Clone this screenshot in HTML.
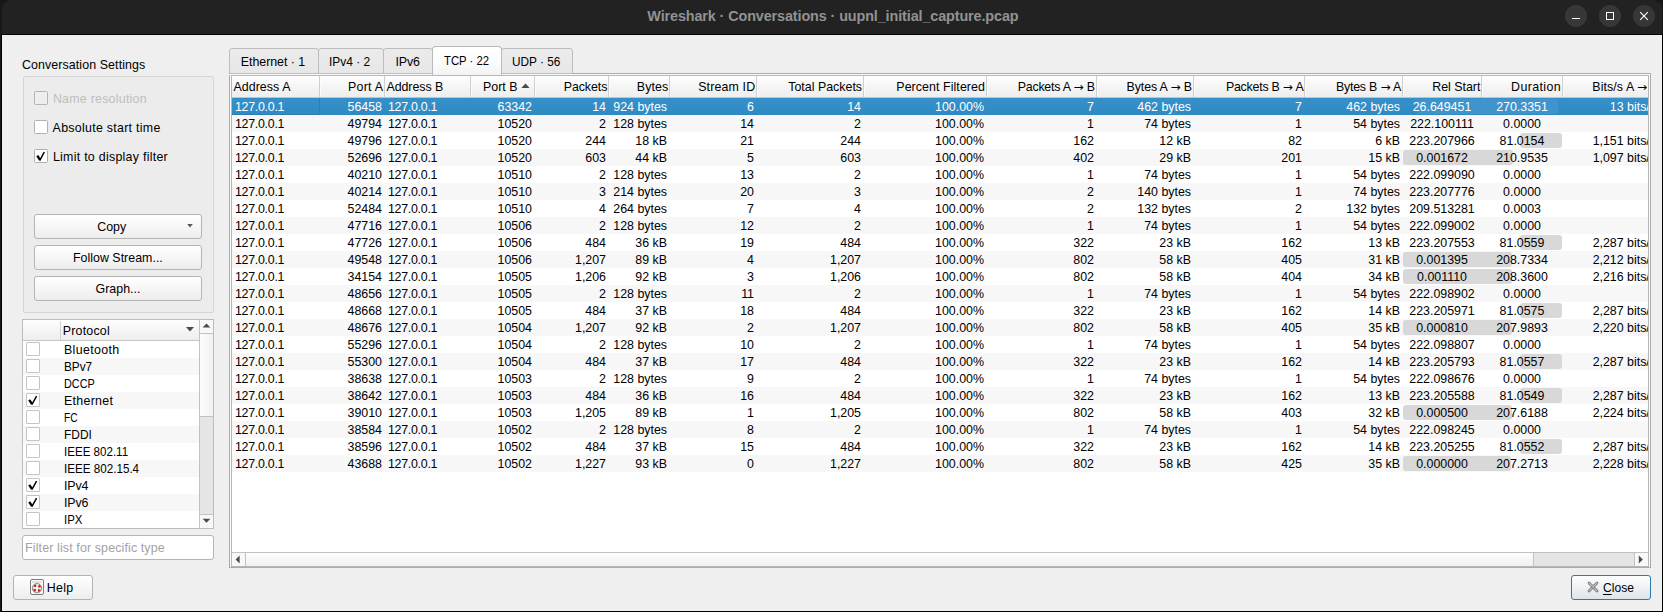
<!DOCTYPE html>
<html><head><meta charset="utf-8"><title>Wireshark · Conversations</title>
<style>
html,body{margin:0;padding:0;background:#000;}
body{width:1663px;height:612px;position:relative;overflow:hidden;font-family:"Liberation Sans",sans-serif;font-size:12.4px;color:#000;}
#root,#root div,#root svg{position:absolute;box-sizing:border-box;}
.t{white-space:pre;line-height:17px;height:17px;}
.btn{border:1px solid #b4b4b4;border-radius:3px;background:linear-gradient(#ffffff,#f6f6f6 50%,#ededed);}
.cb{width:14px;height:14px;border:1px solid #b0b0b0;border-radius:1.5px;background:#fff;}
.sep{top:76px;width:2px;height:21px;background:linear-gradient(90deg,#cfcfcf 50%,#fbfbfb 50%);}
.row{left:232px;width:1417px;height:17px;}
.c{top:1px;height:17px;line-height:17px;white-space:pre;}
.r{text-align:right;}
.bar{height:15px;top:1px;border-radius:3px;}
</style></head><body>
<div id="root" style="left:0;top:0;width:1663px;height:612px;background:#000;overflow:hidden;">
<div style="left:0;top:0;width:1px;height:612px;background:#191919"></div>
<div style="left:1px;top:0;width:1662px;height:34px;background:#161616"></div>
<div style="left:2px;top:0;width:1660px;height:34px;background:#222222;border-radius:9px 9px 0 0;"></div>
<div style="left:2px;top:34px;width:1660px;height:1px;background:#050505;"></div>
<div style="left:2px;top:35px;width:1660px;height:576px;background:#efefef;"></div>

<div class="t" style="left:647.3px;top:8px;letter-spacing:-0.113px;font-size:14.4px;font-weight:bold;color:#929292;">Wireshark · Conversations · uupnl_initial_capture.pcap</div>
<div style="left:1565px;top:5px;width:22px;height:22px;border-radius:11px;background:#373737"><svg style="left:0;top:0" width="22" height="22"><path d="M7 13.5h8" stroke="#fff" stroke-width="1" fill="none"/></svg></div>
<div style="left:1599px;top:5px;width:22px;height:22px;border-radius:11px;background:#373737"><svg style="left:0;top:0" width="22" height="22"><rect x="7.5" y="7.5" width="7" height="7" stroke="#fff" stroke-width="1" fill="none"/></svg></div>
<div style="left:1633px;top:5px;width:22px;height:22px;border-radius:11px;background:#373737"><svg style="left:0;top:0" width="22" height="22"><path d="M7.2 7.2l7.6 7.6M14.8 7.2l-7.6 7.6" stroke="#fff" stroke-width="1.1" fill="none"/></svg></div>
<div class="t" style="left:21.9px;top:57px;letter-spacing:0.108px;font-size:12.4px;">Conversation Settings</div>
<div style="left:23px;top:76px;width:191px;height:237px;border:1px solid #d5d5d5;border-radius:2px;background:#ececec;"></div>
<div class="cb" style="left:34px;top:91px;background:#eeeeee;border-color:#b4b4b4;"></div>
<div class="t" style="left:52.9px;top:91px;letter-spacing:0.251px;font-size:12.4px;color:#bebebe;">Name resolution</div>
<div class="cb" style="left:34px;top:120px;"></div>
<div class="t" style="left:52.6px;top:120px;letter-spacing:0.283px;font-size:12.4px;">Absolute start time</div>
<div class="cb" style="left:34px;top:149px;"><svg style="left:0;top:0" width="12" height="12" viewBox="0 0 12 12"><path d="M2.3 5.7L5 9.9" stroke="#000" stroke-width="2.4" fill="none"/><path d="M4.7 10.7L9.3 2" stroke="#000" stroke-width="1.5" fill="none"/></svg></div>
<div class="t" style="left:52.9px;top:149px;letter-spacing:0.273px;font-size:12.4px;">Limit to display filter</div>
<div class="btn" style="left:34px;top:214px;width:168px;height:25px;"></div>
<div class="t" style="left:97.2px;top:219px;letter-spacing:0.016px;font-size:12.4px;">Copy</div>
<div class="btn" style="left:34px;top:245px;width:168px;height:25px;"></div>
<div class="t" style="left:73.0px;top:250px;letter-spacing:0.018px;font-size:12.4px;">Follow Stream...</div>
<div class="btn" style="left:34px;top:276px;width:168px;height:25px;"></div>
<div class="t" style="left:95.6px;top:281px;letter-spacing:0.004px;font-size:12.4px;">Graph...</div>
<svg style="left:186px;top:223px" width="8" height="6"><path d="M1.2 1h5.6l-2.8 3.6z" fill="#555"/></svg>
<div style="left:22px;top:319px;width:192px;height:210px;border:1px solid #bcbcbc;background:#fff;"></div>
<div style="left:23px;top:320px;width:176px;height:21px;background:linear-gradient(#fdfdfd,#eeeeee);border-bottom:1px solid #c6c6c6;"></div>
<div style="left:60px;top:321px;width:1px;height:19px;background:#d0d0d0;"></div>
<div class="t" style="left:62.7px;top:323px;letter-spacing:0.229px;font-size:12.4px;">Protocol</div>
<svg style="left:185px;top:326px" width="10" height="7"><path d="M1 1h8l-4 4.6z" fill="#4a4a4a"/></svg>
<div class="cb" style="left:26px;top:342px;width:14px;height:14px;border-color:#c4c4c4;border-radius:1px"></div>
<div class="t" style="left:64.0px;top:342px;letter-spacing:0.338px;font-size:12.4px;">Bluetooth</div>
<div style="left:23px;top:358px;width:176px;height:17px;background:#f7f7f7"></div>
<div class="cb" style="left:26px;top:359px;width:14px;height:14px;border-color:#c4c4c4;border-radius:1px"></div>
<div class="t" style="left:64.0px;top:359px;transform-origin:0 0;transform:scaleX(0.9485);font-size:12.4px;">BPv7</div>
<div class="cb" style="left:26px;top:376px;width:14px;height:14px;border-color:#c4c4c4;border-radius:1px"></div>
<div class="t" style="left:64.0px;top:376px;transform-origin:0 0;transform:scaleX(0.8744);font-size:12.4px;">DCCP</div>
<div style="left:23px;top:392px;width:176px;height:17px;background:#f7f7f7"></div>
<div class="cb" style="left:26px;top:393px;width:14px;height:14px;border-color:#c4c4c4;border-radius:1px"><svg style="left:0;top:0" width="12" height="12" viewBox="0 0 12 12"><path d="M2.2 5.9L5 10" stroke="#000" stroke-width="2.3" fill="none"/><path d="M4.8 10.7L9.6 2.2" stroke="#000" stroke-width="1.5" fill="none"/></svg></div>
<div class="t" style="left:64.0px;top:393px;letter-spacing:0.295px;font-size:12.4px;">Ethernet</div>
<div class="cb" style="left:26px;top:410px;width:14px;height:14px;border-color:#c4c4c4;border-radius:1px"></div>
<div class="t" style="left:64.0px;top:410px;transform-origin:0 0;transform:scaleX(0.8227);font-size:12.4px;">FC</div>
<div style="left:23px;top:426px;width:176px;height:17px;background:#f7f7f7"></div>
<div class="cb" style="left:26px;top:427px;width:14px;height:14px;border-color:#c4c4c4;border-radius:1px"></div>
<div class="t" style="left:64.0px;top:427px;transform-origin:0 0;transform:scaleX(0.9612);font-size:12.4px;">FDDI</div>
<div class="cb" style="left:26px;top:444px;width:14px;height:14px;border-color:#c4c4c4;border-radius:1px"></div>
<div class="t" style="left:64.0px;top:444px;transform-origin:0 0;transform:scaleX(0.9336);font-size:12.4px;">IEEE 802.11</div>
<div style="left:23px;top:460px;width:176px;height:17px;background:#f7f7f7"></div>
<div class="cb" style="left:26px;top:461px;width:14px;height:14px;border-color:#c4c4c4;border-radius:1px"></div>
<div class="t" style="left:64.0px;top:461px;transform-origin:0 0;transform:scaleX(0.9397);font-size:12.4px;">IEEE 802.15.4</div>
<div class="cb" style="left:26px;top:478px;width:14px;height:14px;border-color:#c4c4c4;border-radius:1px"><svg style="left:0;top:0" width="12" height="12" viewBox="0 0 12 12"><path d="M2.2 5.9L5 10" stroke="#000" stroke-width="2.3" fill="none"/><path d="M4.8 10.7L9.6 2.2" stroke="#000" stroke-width="1.5" fill="none"/></svg></div>
<div class="t" style="left:64.0px;top:478px;letter-spacing:-0.099px;font-size:12.4px;">IPv4</div>
<div style="left:23px;top:494px;width:176px;height:17px;background:#f7f7f7"></div>
<div class="cb" style="left:26px;top:495px;width:14px;height:14px;border-color:#c4c4c4;border-radius:1px"><svg style="left:0;top:0" width="12" height="12" viewBox="0 0 12 12"><path d="M2.2 5.9L5 10" stroke="#000" stroke-width="2.3" fill="none"/><path d="M4.8 10.7L9.6 2.2" stroke="#000" stroke-width="1.5" fill="none"/></svg></div>
<div class="t" style="left:64.0px;top:495px;letter-spacing:-0.099px;font-size:12.4px;">IPv6</div>
<div class="cb" style="left:26px;top:512px;width:14px;height:14px;border-color:#c4c4c4;border-radius:1px"></div>
<div class="t" style="left:64.0px;top:512px;transform-origin:0 0;transform:scaleX(0.9257);font-size:12.4px;">IPX</div>
<div style="left:199px;top:320px;width:14px;height:208px;background:#e5e5e5;border-left:1px solid #c2c2c2;"></div>
<div style="left:200px;top:320px;width:13px;height:14px;background:#f8f8f8;border-bottom:1px solid #c2c2c2"><svg style="left:1.5px;top:3.3px" width="9" height="6"><path d="M0.6 4.6l3.9-4l3.9 4z" fill="#4a4a4a"/></svg></div>
<div style="left:200px;top:334px;width:13px;height:83px;background:linear-gradient(90deg,#fdfdfd,#f1f1f1);border-bottom:1px solid #c2c2c2"></div>
<div style="left:200px;top:514px;width:13px;height:14px;background:#f8f8f8;border-top:1px solid #c2c2c2"><svg style="left:1.5px;top:3.2px" width="9" height="6"><path d="M0.6 0.8l3.9 4l3.9-4z" fill="#4a4a4a"/></svg></div>
<div style="left:22px;top:535px;width:192px;height:25px;border:1px solid #b4b4b4;border-radius:3px;background:#fff;"></div>
<div class="t" style="left:25.1px;top:540px;letter-spacing:0.139px;font-size:12.4px;color:#a2a2a2;">Filter list for specific type</div>
<div class="btn" style="left:13px;top:575px;width:80px;height:25px;"></div>
<div style="left:30px;top:579px;width:14px;height:16px;border:1px solid #7b7b73;border-radius:2px;background:#fbfbfb"><div style="left:1px;top:1px;width:10px;height:2px;background:#e1e1df"></div><svg style="left:0;top:2px" width="12" height="12" viewBox="0 0 12 12"><circle cx="6" cy="6.2" r="4.7" fill="#e3eceA" stroke="#808080" stroke-width="0.9"/><circle cx="6" cy="6.2" r="3.0" fill="none" stroke="#d92020" stroke-width="2.5" stroke-dasharray="2.2 2.512" stroke-dashoffset="-1.256"/><circle cx="6" cy="6.2" r="1.3" fill="#ffffff"/></svg></div>
<div class="t" style="left:46.8px;top:580px;letter-spacing:0.304px;font-size:12.4px;">Help</div>
<div style="left:229px;top:73px;width:1422px;height:495px;border:1px solid #ababab;background:#fbfbfb;"></div>
<div style="left:229px;top:48px;width:90px;height:26px;border:1px solid #bdbdbd;border-radius:3px 3px 0 0;background:linear-gradient(#ebebeb,#e7e7e7);"></div>
<div class="t" style="left:240.8px;top:54px;letter-spacing:-0.037px;font-size:12.4px;">Ethernet · 1</div>
<div style="left:318px;top:48px;width:66px;height:26px;border:1px solid #bdbdbd;border-radius:3px 3px 0 0;background:linear-gradient(#ebebeb,#e7e7e7);"></div>
<div class="t" style="left:329.3px;top:54px;transform-origin:0 0;transform:scaleX(0.9648);font-size:12.4px;">IPv4 · 2</div>
<div style="left:383px;top:48px;width:50px;height:26px;border:1px solid #bdbdbd;border-radius:3px 3px 0 0;background:linear-gradient(#ebebeb,#e7e7e7);"></div>
<div class="t" style="left:395.5px;top:54px;letter-spacing:-0.124px;font-size:12.4px;">IPv6</div>
<div style="left:501px;top:48px;width:72px;height:26px;border:1px solid #bdbdbd;border-radius:3px 3px 0 0;background:linear-gradient(#ebebeb,#e7e7e7);"></div>
<div class="t" style="left:512.4px;top:54px;transform-origin:0 0;transform:scaleX(0.9520);font-size:12.4px;">UDP · 56</div>
<div style="left:432px;top:46px;width:70px;height:29px;border:1px solid #b9b9b9;border-bottom:none;border-radius:4px 4px 0 0;background:linear-gradient(#ffffff,#fbfbfb 60%,#f3f3f3);"></div>
<div class="t" style="left:443.7px;top:53px;transform-origin:0 0;transform:scaleX(0.9117);font-size:12.4px;">TCP · 22</div>
<div style="left:229px;top:74px;width:1px;height:1px;background:#f6f6f6"></div>
<div style="left:231px;top:75px;width:1418px;height:492px;border:1px solid #b6b6b6;background:#fff;"></div>
<div style="left:0;top:0;width:1648px;height:566px;overflow:hidden;background:transparent;">
<div style="left:232px;top:76px;width:1416px;height:22px;background:linear-gradient(#fefefe,#f6f6f6 45%,#eeeeee);border-bottom:1px solid #c4c4c4;"></div>
<div class="t" style="left:233.4px;top:79px;letter-spacing:0.068px;font-size:12.4px;">Address A</div>
<div class="sep" style="left:319px"></div>
<div class="t" style="left:348.1px;top:79px;letter-spacing:0.225px;font-size:12.4px;">Port A</div>
<div class="sep" style="left:384px"></div>
<div class="t" style="left:386.5px;top:79px;letter-spacing:-0.064px;font-size:12.4px;">Address B</div>
<div class="sep" style="left:470px"></div>
<div class="t" style="left:482.9px;top:79px;letter-spacing:0.044px;font-size:12.4px;">Port B</div>
<div class="sep" style="left:534px"></div>
<div class="t" style="left:563.7px;top:79px;letter-spacing:-0.068px;font-size:12.4px;">Packets</div>
<div class="sep" style="left:608px"></div>
<div class="t" style="left:636.8px;top:79px;letter-spacing:0.080px;font-size:12.4px;">Bytes</div>
<div class="sep" style="left:669px"></div>
<div class="t" style="left:698.2px;top:79px;letter-spacing:0.147px;font-size:12.4px;">Stream ID</div>
<div class="sep" style="left:756px"></div>
<div class="t" style="left:788.2px;top:79px;letter-spacing:0.015px;font-size:12.4px;">Total Packets</div>
<div class="sep" style="left:863px"></div>
<div class="t" style="left:896.3px;top:79px;letter-spacing:0.077px;font-size:12.4px;">Percent Filtered</div>
<div class="sep" style="left:986px"></div>
<div class="t" style="left:1017.7px;top:79px;letter-spacing:-0.215px">Packets A <span style="font-family:'DejaVu Sans',sans-serif;font-size:12px;letter-spacing:0">→</span> B</div>
<div class="sep" style="left:1096px"></div>
<div class="t" style="left:1126.6px;top:79px;letter-spacing:-0.120px">Bytes A <span style="font-family:'DejaVu Sans',sans-serif;font-size:12px;letter-spacing:0">→</span> B</div>
<div class="sep" style="left:1193px"></div>
<div class="t" style="left:1225.9px;top:79px;letter-spacing:-0.230px">Packets B <span style="font-family:'DejaVu Sans',sans-serif;font-size:12px;letter-spacing:0">→</span> A</div>
<div class="sep" style="left:1304px"></div>
<div class="t" style="left:1335.9px;top:79px;letter-spacing:-0.207px">Bytes B <span style="font-family:'DejaVu Sans',sans-serif;font-size:12px;letter-spacing:0">→</span> A</div>
<div class="sep" style="left:1402px"></div>
<div class="t" style="left:1432.3px;top:79px;letter-spacing:-0.011px;font-size:12.4px;">Rel Start</div>
<div class="sep" style="left:1481px"></div>
<div class="t" style="left:1511.1px;top:79px;letter-spacing:0.382px;font-size:12.4px;">Duration</div>
<div class="sep" style="left:1562px"></div>
<div class="t" style="left:1592.3px;top:79px;letter-spacing:0.080px">Bits/s A <span style="font-family:'DejaVu Sans',sans-serif;font-size:12px;letter-spacing:0">→</span></div>
<svg style="left:521px;top:83px" width="9" height="6"><path d="M0.4 5l4.1-4.4l4.1 4.4z" fill="#4a4a4a"/></svg>
<div class="row" style="top:98px;background:linear-gradient(#3691ca,#2f8ac4);color:#fff">
<div style="left:0;top:0;width:88px;height:17px;border:1px solid #2b7fb6;border-top-color:#318bc4;border-left:none;"></div>
<div class="bar" style="left:1184.9px;width:141.3px;background:#3e94cb"></div>
<div class="c" style="left:3px;width:87px;letter-spacing:-0.28px">127.0.0.1</div>
<div class="c r" style="left:88px;width:62.0px">56458</div>
<div class="c" style="left:156px;width:85px;letter-spacing:-0.28px">127.0.0.1</div>
<div class="c r" style="left:239px;width:61.0px">63342</div>
<div class="c r" style="left:303px;width:71.0px">14</div>
<div class="c r" style="left:377px;width:58.0px">924 bytes</div>
<div class="c r" style="left:438px;width:84.0px">6</div>
<div class="c r" style="left:525px;width:104.0px">14</div>
<div class="c r" style="left:632px;width:120.0px">100.00%</div>
<div class="c r" style="left:755px;width:107.0px">7</div>
<div class="c r" style="left:865px;width:94.0px">462 bytes</div>
<div class="c r" style="left:962px;width:108.0px">7</div>
<div class="c r" style="left:1073px;width:95.0px">462 bytes</div>
<div class="c" style="left:1171px;width:78px;text-align:center">26.649451</div>
<div class="c" style="left:1250px;width:80px;text-align:center">270.3351</div>
<div class="c r" style="left:1331px;width:93px">13 bits/s</div>
</div>
<div class="row" style="top:115px;background:#f7f7f7;color:#000">
<div class="c" style="left:3px;width:87px;letter-spacing:-0.28px">127.0.0.1</div>
<div class="c r" style="left:88px;width:62.0px">49794</div>
<div class="c" style="left:156px;width:85px;letter-spacing:-0.28px">127.0.0.1</div>
<div class="c r" style="left:239px;width:61.0px">10520</div>
<div class="c r" style="left:303px;width:71.0px">2</div>
<div class="c r" style="left:377px;width:58.0px">128 bytes</div>
<div class="c r" style="left:438px;width:84.0px">14</div>
<div class="c r" style="left:525px;width:104.0px">2</div>
<div class="c r" style="left:632px;width:120.0px">100.00%</div>
<div class="c r" style="left:755px;width:107.0px">1</div>
<div class="c r" style="left:865px;width:94.0px">74 bytes</div>
<div class="c r" style="left:962px;width:108.0px">1</div>
<div class="c r" style="left:1073px;width:95.0px">54 bytes</div>
<div class="c" style="left:1171px;width:78px;text-align:center">222.100111</div>
<div class="c" style="left:1250px;width:80px;text-align:center">0.0000</div>
</div>
<div class="row" style="top:132px;background:#fff;color:#000">
<div class="bar" style="left:1287.6px;width:42.3px;background:#d8d8d8"></div>
<div class="c" style="left:3px;width:87px;letter-spacing:-0.28px">127.0.0.1</div>
<div class="c r" style="left:88px;width:62.0px">49796</div>
<div class="c" style="left:156px;width:85px;letter-spacing:-0.28px">127.0.0.1</div>
<div class="c r" style="left:239px;width:61.0px">10520</div>
<div class="c r" style="left:303px;width:71.0px">244</div>
<div class="c r" style="left:377px;width:58.0px">18 kB</div>
<div class="c r" style="left:438px;width:84.0px">21</div>
<div class="c r" style="left:525px;width:104.0px">244</div>
<div class="c r" style="left:632px;width:120.0px">100.00%</div>
<div class="c r" style="left:755px;width:107.0px">162</div>
<div class="c r" style="left:865px;width:94.0px">12 kB</div>
<div class="c r" style="left:962px;width:108.0px">82</div>
<div class="c r" style="left:1073px;width:95.0px">6 kB</div>
<div class="c" style="left:1171px;width:78px;text-align:center">223.207966</div>
<div class="c" style="left:1250px;width:80px;text-align:center">81.0154</div>
<div class="c r" style="left:1331px;width:93px">1,151 bits/s</div>
</div>
<div class="row" style="top:149px;background:#f7f7f7;color:#000">
<div class="bar" style="left:1171.0px;width:110.2px;background:#d8d8d8"></div>
<div class="c" style="left:3px;width:87px;letter-spacing:-0.28px">127.0.0.1</div>
<div class="c r" style="left:88px;width:62.0px">52696</div>
<div class="c" style="left:156px;width:85px;letter-spacing:-0.28px">127.0.0.1</div>
<div class="c r" style="left:239px;width:61.0px">10520</div>
<div class="c r" style="left:303px;width:71.0px">603</div>
<div class="c r" style="left:377px;width:58.0px">44 kB</div>
<div class="c r" style="left:438px;width:84.0px">5</div>
<div class="c r" style="left:525px;width:104.0px">603</div>
<div class="c r" style="left:632px;width:120.0px">100.00%</div>
<div class="c r" style="left:755px;width:107.0px">402</div>
<div class="c r" style="left:865px;width:94.0px">29 kB</div>
<div class="c r" style="left:962px;width:108.0px">201</div>
<div class="c r" style="left:1073px;width:95.0px">15 kB</div>
<div class="c" style="left:1171px;width:78px;text-align:center">0.001672</div>
<div class="c" style="left:1250px;width:80px;text-align:center">210.9535</div>
<div class="c r" style="left:1331px;width:93px">1,097 bits/s</div>
</div>
<div class="row" style="top:166px;background:#fff;color:#000">
<div class="c" style="left:3px;width:87px;letter-spacing:-0.28px">127.0.0.1</div>
<div class="c r" style="left:88px;width:62.0px">40210</div>
<div class="c" style="left:156px;width:85px;letter-spacing:-0.28px">127.0.0.1</div>
<div class="c r" style="left:239px;width:61.0px">10510</div>
<div class="c r" style="left:303px;width:71.0px">2</div>
<div class="c r" style="left:377px;width:58.0px">128 bytes</div>
<div class="c r" style="left:438px;width:84.0px">13</div>
<div class="c r" style="left:525px;width:104.0px">2</div>
<div class="c r" style="left:632px;width:120.0px">100.00%</div>
<div class="c r" style="left:755px;width:107.0px">1</div>
<div class="c r" style="left:865px;width:94.0px">74 bytes</div>
<div class="c r" style="left:962px;width:108.0px">1</div>
<div class="c r" style="left:1073px;width:95.0px">54 bytes</div>
<div class="c" style="left:1171px;width:78px;text-align:center">222.099090</div>
<div class="c" style="left:1250px;width:80px;text-align:center">0.0000</div>
</div>
<div class="row" style="top:183px;background:#f7f7f7;color:#000">
<div class="c" style="left:3px;width:87px;letter-spacing:-0.28px">127.0.0.1</div>
<div class="c r" style="left:88px;width:62.0px">40214</div>
<div class="c" style="left:156px;width:85px;letter-spacing:-0.28px">127.0.0.1</div>
<div class="c r" style="left:239px;width:61.0px">10510</div>
<div class="c r" style="left:303px;width:71.0px">3</div>
<div class="c r" style="left:377px;width:58.0px">214 bytes</div>
<div class="c r" style="left:438px;width:84.0px">20</div>
<div class="c r" style="left:525px;width:104.0px">3</div>
<div class="c r" style="left:632px;width:120.0px">100.00%</div>
<div class="c r" style="left:755px;width:107.0px">2</div>
<div class="c r" style="left:865px;width:94.0px">140 bytes</div>
<div class="c r" style="left:962px;width:108.0px">1</div>
<div class="c r" style="left:1073px;width:95.0px">74 bytes</div>
<div class="c" style="left:1171px;width:78px;text-align:center">223.207776</div>
<div class="c" style="left:1250px;width:80px;text-align:center">0.0000</div>
</div>
<div class="row" style="top:200px;background:#fff;color:#000">
<div class="c" style="left:3px;width:87px;letter-spacing:-0.28px">127.0.0.1</div>
<div class="c r" style="left:88px;width:62.0px">52484</div>
<div class="c" style="left:156px;width:85px;letter-spacing:-0.28px">127.0.0.1</div>
<div class="c r" style="left:239px;width:61.0px">10510</div>
<div class="c r" style="left:303px;width:71.0px">4</div>
<div class="c r" style="left:377px;width:58.0px">264 bytes</div>
<div class="c r" style="left:438px;width:84.0px">7</div>
<div class="c r" style="left:525px;width:104.0px">4</div>
<div class="c r" style="left:632px;width:120.0px">100.00%</div>
<div class="c r" style="left:755px;width:107.0px">2</div>
<div class="c r" style="left:865px;width:94.0px">132 bytes</div>
<div class="c r" style="left:962px;width:108.0px">2</div>
<div class="c r" style="left:1073px;width:95.0px">132 bytes</div>
<div class="c" style="left:1171px;width:78px;text-align:center">209.513281</div>
<div class="c" style="left:1250px;width:80px;text-align:center">0.0003</div>
</div>
<div class="row" style="top:217px;background:#f7f7f7;color:#000">
<div class="c" style="left:3px;width:87px;letter-spacing:-0.28px">127.0.0.1</div>
<div class="c r" style="left:88px;width:62.0px">47716</div>
<div class="c" style="left:156px;width:85px;letter-spacing:-0.28px">127.0.0.1</div>
<div class="c r" style="left:239px;width:61.0px">10506</div>
<div class="c r" style="left:303px;width:71.0px">2</div>
<div class="c r" style="left:377px;width:58.0px">128 bytes</div>
<div class="c r" style="left:438px;width:84.0px">12</div>
<div class="c r" style="left:525px;width:104.0px">2</div>
<div class="c r" style="left:632px;width:120.0px">100.00%</div>
<div class="c r" style="left:755px;width:107.0px">1</div>
<div class="c r" style="left:865px;width:94.0px">74 bytes</div>
<div class="c r" style="left:962px;width:108.0px">1</div>
<div class="c r" style="left:1073px;width:95.0px">54 bytes</div>
<div class="c" style="left:1171px;width:78px;text-align:center">222.099002</div>
<div class="c" style="left:1250px;width:80px;text-align:center">0.0000</div>
</div>
<div class="row" style="top:234px;background:#fff;color:#000">
<div class="bar" style="left:1287.6px;width:42.4px;background:#d8d8d8"></div>
<div class="c" style="left:3px;width:87px;letter-spacing:-0.28px">127.0.0.1</div>
<div class="c r" style="left:88px;width:62.0px">47726</div>
<div class="c" style="left:156px;width:85px;letter-spacing:-0.28px">127.0.0.1</div>
<div class="c r" style="left:239px;width:61.0px">10506</div>
<div class="c r" style="left:303px;width:71.0px">484</div>
<div class="c r" style="left:377px;width:58.0px">36 kB</div>
<div class="c r" style="left:438px;width:84.0px">19</div>
<div class="c r" style="left:525px;width:104.0px">484</div>
<div class="c r" style="left:632px;width:120.0px">100.00%</div>
<div class="c r" style="left:755px;width:107.0px">322</div>
<div class="c r" style="left:865px;width:94.0px">23 kB</div>
<div class="c r" style="left:962px;width:108.0px">162</div>
<div class="c r" style="left:1073px;width:95.0px">13 kB</div>
<div class="c" style="left:1171px;width:78px;text-align:center">223.207553</div>
<div class="c" style="left:1250px;width:80px;text-align:center">81.0559</div>
<div class="c r" style="left:1331px;width:93px">2,287 bits/s</div>
</div>
<div class="row" style="top:251px;background:#f7f7f7;color:#000">
<div class="bar" style="left:1171.0px;width:109.1px;background:#d8d8d8"></div>
<div class="c" style="left:3px;width:87px;letter-spacing:-0.28px">127.0.0.1</div>
<div class="c r" style="left:88px;width:62.0px">49548</div>
<div class="c" style="left:156px;width:85px;letter-spacing:-0.28px">127.0.0.1</div>
<div class="c r" style="left:239px;width:61.0px">10506</div>
<div class="c r" style="left:303px;width:71.0px">1,207</div>
<div class="c r" style="left:377px;width:58.0px">89 kB</div>
<div class="c r" style="left:438px;width:84.0px">4</div>
<div class="c r" style="left:525px;width:104.0px">1,207</div>
<div class="c r" style="left:632px;width:120.0px">100.00%</div>
<div class="c r" style="left:755px;width:107.0px">802</div>
<div class="c r" style="left:865px;width:94.0px">58 kB</div>
<div class="c r" style="left:962px;width:108.0px">405</div>
<div class="c r" style="left:1073px;width:95.0px">31 kB</div>
<div class="c" style="left:1171px;width:78px;text-align:center">0.001395</div>
<div class="c" style="left:1250px;width:80px;text-align:center">208.7334</div>
<div class="c r" style="left:1331px;width:93px">2,212 bits/s</div>
</div>
<div class="row" style="top:268px;background:#fff;color:#000">
<div class="bar" style="left:1171.0px;width:108.9px;background:#d8d8d8"></div>
<div class="c" style="left:3px;width:87px;letter-spacing:-0.28px">127.0.0.1</div>
<div class="c r" style="left:88px;width:62.0px">34154</div>
<div class="c" style="left:156px;width:85px;letter-spacing:-0.28px">127.0.0.1</div>
<div class="c r" style="left:239px;width:61.0px">10505</div>
<div class="c r" style="left:303px;width:71.0px">1,206</div>
<div class="c r" style="left:377px;width:58.0px">92 kB</div>
<div class="c r" style="left:438px;width:84.0px">3</div>
<div class="c r" style="left:525px;width:104.0px">1,206</div>
<div class="c r" style="left:632px;width:120.0px">100.00%</div>
<div class="c r" style="left:755px;width:107.0px">802</div>
<div class="c r" style="left:865px;width:94.0px">58 kB</div>
<div class="c r" style="left:962px;width:108.0px">404</div>
<div class="c r" style="left:1073px;width:95.0px">34 kB</div>
<div class="c" style="left:1171px;width:78px;text-align:center">0.001110</div>
<div class="c" style="left:1250px;width:80px;text-align:center">208.3600</div>
<div class="c r" style="left:1331px;width:93px">2,216 bits/s</div>
</div>
<div class="row" style="top:285px;background:#f7f7f7;color:#000">
<div class="c" style="left:3px;width:87px;letter-spacing:-0.28px">127.0.0.1</div>
<div class="c r" style="left:88px;width:62.0px">48656</div>
<div class="c" style="left:156px;width:85px;letter-spacing:-0.28px">127.0.0.1</div>
<div class="c r" style="left:239px;width:61.0px">10505</div>
<div class="c r" style="left:303px;width:71.0px">2</div>
<div class="c r" style="left:377px;width:58.0px">128 bytes</div>
<div class="c r" style="left:438px;width:84.0px">11</div>
<div class="c r" style="left:525px;width:104.0px">2</div>
<div class="c r" style="left:632px;width:120.0px">100.00%</div>
<div class="c r" style="left:755px;width:107.0px">1</div>
<div class="c r" style="left:865px;width:94.0px">74 bytes</div>
<div class="c r" style="left:962px;width:108.0px">1</div>
<div class="c r" style="left:1073px;width:95.0px">54 bytes</div>
<div class="c" style="left:1171px;width:78px;text-align:center">222.098902</div>
<div class="c" style="left:1250px;width:80px;text-align:center">0.0000</div>
</div>
<div class="row" style="top:302px;background:#fff;color:#000">
<div class="bar" style="left:1287.6px;width:42.4px;background:#d8d8d8"></div>
<div class="c" style="left:3px;width:87px;letter-spacing:-0.28px">127.0.0.1</div>
<div class="c r" style="left:88px;width:62.0px">48668</div>
<div class="c" style="left:156px;width:85px;letter-spacing:-0.28px">127.0.0.1</div>
<div class="c r" style="left:239px;width:61.0px">10505</div>
<div class="c r" style="left:303px;width:71.0px">484</div>
<div class="c r" style="left:377px;width:58.0px">37 kB</div>
<div class="c r" style="left:438px;width:84.0px">18</div>
<div class="c r" style="left:525px;width:104.0px">484</div>
<div class="c r" style="left:632px;width:120.0px">100.00%</div>
<div class="c r" style="left:755px;width:107.0px">322</div>
<div class="c r" style="left:865px;width:94.0px">23 kB</div>
<div class="c r" style="left:962px;width:108.0px">162</div>
<div class="c r" style="left:1073px;width:95.0px">14 kB</div>
<div class="c" style="left:1171px;width:78px;text-align:center">223.205971</div>
<div class="c" style="left:1250px;width:80px;text-align:center">81.0575</div>
<div class="c r" style="left:1331px;width:93px">2,287 bits/s</div>
</div>
<div class="row" style="top:319px;background:#f7f7f7;color:#000">
<div class="bar" style="left:1171.0px;width:108.7px;background:#d8d8d8"></div>
<div class="c" style="left:3px;width:87px;letter-spacing:-0.28px">127.0.0.1</div>
<div class="c r" style="left:88px;width:62.0px">48676</div>
<div class="c" style="left:156px;width:85px;letter-spacing:-0.28px">127.0.0.1</div>
<div class="c r" style="left:239px;width:61.0px">10504</div>
<div class="c r" style="left:303px;width:71.0px">1,207</div>
<div class="c r" style="left:377px;width:58.0px">92 kB</div>
<div class="c r" style="left:438px;width:84.0px">2</div>
<div class="c r" style="left:525px;width:104.0px">1,207</div>
<div class="c r" style="left:632px;width:120.0px">100.00%</div>
<div class="c r" style="left:755px;width:107.0px">802</div>
<div class="c r" style="left:865px;width:94.0px">58 kB</div>
<div class="c r" style="left:962px;width:108.0px">405</div>
<div class="c r" style="left:1073px;width:95.0px">35 kB</div>
<div class="c" style="left:1171px;width:78px;text-align:center">0.000810</div>
<div class="c" style="left:1250px;width:80px;text-align:center">207.9893</div>
<div class="c r" style="left:1331px;width:93px">2,220 bits/s</div>
</div>
<div class="row" style="top:336px;background:#fff;color:#000">
<div class="c" style="left:3px;width:87px;letter-spacing:-0.28px">127.0.0.1</div>
<div class="c r" style="left:88px;width:62.0px">55296</div>
<div class="c" style="left:156px;width:85px;letter-spacing:-0.28px">127.0.0.1</div>
<div class="c r" style="left:239px;width:61.0px">10504</div>
<div class="c r" style="left:303px;width:71.0px">2</div>
<div class="c r" style="left:377px;width:58.0px">128 bytes</div>
<div class="c r" style="left:438px;width:84.0px">10</div>
<div class="c r" style="left:525px;width:104.0px">2</div>
<div class="c r" style="left:632px;width:120.0px">100.00%</div>
<div class="c r" style="left:755px;width:107.0px">1</div>
<div class="c r" style="left:865px;width:94.0px">74 bytes</div>
<div class="c r" style="left:962px;width:108.0px">1</div>
<div class="c r" style="left:1073px;width:95.0px">54 bytes</div>
<div class="c" style="left:1171px;width:78px;text-align:center">222.098807</div>
<div class="c" style="left:1250px;width:80px;text-align:center">0.0000</div>
</div>
<div class="row" style="top:353px;background:#f7f7f7;color:#000">
<div class="bar" style="left:1287.6px;width:42.4px;background:#d8d8d8"></div>
<div class="c" style="left:3px;width:87px;letter-spacing:-0.28px">127.0.0.1</div>
<div class="c r" style="left:88px;width:62.0px">55300</div>
<div class="c" style="left:156px;width:85px;letter-spacing:-0.28px">127.0.0.1</div>
<div class="c r" style="left:239px;width:61.0px">10504</div>
<div class="c r" style="left:303px;width:71.0px">484</div>
<div class="c r" style="left:377px;width:58.0px">37 kB</div>
<div class="c r" style="left:438px;width:84.0px">17</div>
<div class="c r" style="left:525px;width:104.0px">484</div>
<div class="c r" style="left:632px;width:120.0px">100.00%</div>
<div class="c r" style="left:755px;width:107.0px">322</div>
<div class="c r" style="left:865px;width:94.0px">23 kB</div>
<div class="c r" style="left:962px;width:108.0px">162</div>
<div class="c r" style="left:1073px;width:95.0px">14 kB</div>
<div class="c" style="left:1171px;width:78px;text-align:center">223.205793</div>
<div class="c" style="left:1250px;width:80px;text-align:center">81.0557</div>
<div class="c r" style="left:1331px;width:93px">2,287 bits/s</div>
</div>
<div class="row" style="top:370px;background:#fff;color:#000">
<div class="c" style="left:3px;width:87px;letter-spacing:-0.28px">127.0.0.1</div>
<div class="c r" style="left:88px;width:62.0px">38638</div>
<div class="c" style="left:156px;width:85px;letter-spacing:-0.28px">127.0.0.1</div>
<div class="c r" style="left:239px;width:61.0px">10503</div>
<div class="c r" style="left:303px;width:71.0px">2</div>
<div class="c r" style="left:377px;width:58.0px">128 bytes</div>
<div class="c r" style="left:438px;width:84.0px">9</div>
<div class="c r" style="left:525px;width:104.0px">2</div>
<div class="c r" style="left:632px;width:120.0px">100.00%</div>
<div class="c r" style="left:755px;width:107.0px">1</div>
<div class="c r" style="left:865px;width:94.0px">74 bytes</div>
<div class="c r" style="left:962px;width:108.0px">1</div>
<div class="c r" style="left:1073px;width:95.0px">54 bytes</div>
<div class="c" style="left:1171px;width:78px;text-align:center">222.098676</div>
<div class="c" style="left:1250px;width:80px;text-align:center">0.0000</div>
</div>
<div class="row" style="top:387px;background:#f7f7f7;color:#000">
<div class="bar" style="left:1287.6px;width:42.4px;background:#d8d8d8"></div>
<div class="c" style="left:3px;width:87px;letter-spacing:-0.28px">127.0.0.1</div>
<div class="c r" style="left:88px;width:62.0px">38642</div>
<div class="c" style="left:156px;width:85px;letter-spacing:-0.28px">127.0.0.1</div>
<div class="c r" style="left:239px;width:61.0px">10503</div>
<div class="c r" style="left:303px;width:71.0px">484</div>
<div class="c r" style="left:377px;width:58.0px">36 kB</div>
<div class="c r" style="left:438px;width:84.0px">16</div>
<div class="c r" style="left:525px;width:104.0px">484</div>
<div class="c r" style="left:632px;width:120.0px">100.00%</div>
<div class="c r" style="left:755px;width:107.0px">322</div>
<div class="c r" style="left:865px;width:94.0px">23 kB</div>
<div class="c r" style="left:962px;width:108.0px">162</div>
<div class="c r" style="left:1073px;width:95.0px">13 kB</div>
<div class="c" style="left:1171px;width:78px;text-align:center">223.205588</div>
<div class="c" style="left:1250px;width:80px;text-align:center">81.0549</div>
<div class="c r" style="left:1331px;width:93px">2,287 bits/s</div>
</div>
<div class="row" style="top:404px;background:#fff;color:#000">
<div class="bar" style="left:1171.0px;width:108.5px;background:#d8d8d8"></div>
<div class="c" style="left:3px;width:87px;letter-spacing:-0.28px">127.0.0.1</div>
<div class="c r" style="left:88px;width:62.0px">39010</div>
<div class="c" style="left:156px;width:85px;letter-spacing:-0.28px">127.0.0.1</div>
<div class="c r" style="left:239px;width:61.0px">10503</div>
<div class="c r" style="left:303px;width:71.0px">1,205</div>
<div class="c r" style="left:377px;width:58.0px">89 kB</div>
<div class="c r" style="left:438px;width:84.0px">1</div>
<div class="c r" style="left:525px;width:104.0px">1,205</div>
<div class="c r" style="left:632px;width:120.0px">100.00%</div>
<div class="c r" style="left:755px;width:107.0px">802</div>
<div class="c r" style="left:865px;width:94.0px">58 kB</div>
<div class="c r" style="left:962px;width:108.0px">403</div>
<div class="c r" style="left:1073px;width:95.0px">32 kB</div>
<div class="c" style="left:1171px;width:78px;text-align:center">0.000500</div>
<div class="c" style="left:1250px;width:80px;text-align:center">207.6188</div>
<div class="c r" style="left:1331px;width:93px">2,224 bits/s</div>
</div>
<div class="row" style="top:421px;background:#f7f7f7;color:#000">
<div class="c" style="left:3px;width:87px;letter-spacing:-0.28px">127.0.0.1</div>
<div class="c r" style="left:88px;width:62.0px">38584</div>
<div class="c" style="left:156px;width:85px;letter-spacing:-0.28px">127.0.0.1</div>
<div class="c r" style="left:239px;width:61.0px">10502</div>
<div class="c r" style="left:303px;width:71.0px">2</div>
<div class="c r" style="left:377px;width:58.0px">128 bytes</div>
<div class="c r" style="left:438px;width:84.0px">8</div>
<div class="c r" style="left:525px;width:104.0px">2</div>
<div class="c r" style="left:632px;width:120.0px">100.00%</div>
<div class="c r" style="left:755px;width:107.0px">1</div>
<div class="c r" style="left:865px;width:94.0px">74 bytes</div>
<div class="c r" style="left:962px;width:108.0px">1</div>
<div class="c r" style="left:1073px;width:95.0px">54 bytes</div>
<div class="c" style="left:1171px;width:78px;text-align:center">222.098245</div>
<div class="c" style="left:1250px;width:80px;text-align:center">0.0000</div>
</div>
<div class="row" style="top:438px;background:#fff;color:#000">
<div class="bar" style="left:1287.6px;width:42.4px;background:#d8d8d8"></div>
<div class="c" style="left:3px;width:87px;letter-spacing:-0.28px">127.0.0.1</div>
<div class="c r" style="left:88px;width:62.0px">38596</div>
<div class="c" style="left:156px;width:85px;letter-spacing:-0.28px">127.0.0.1</div>
<div class="c r" style="left:239px;width:61.0px">10502</div>
<div class="c r" style="left:303px;width:71.0px">484</div>
<div class="c r" style="left:377px;width:58.0px">37 kB</div>
<div class="c r" style="left:438px;width:84.0px">15</div>
<div class="c r" style="left:525px;width:104.0px">484</div>
<div class="c r" style="left:632px;width:120.0px">100.00%</div>
<div class="c r" style="left:755px;width:107.0px">322</div>
<div class="c r" style="left:865px;width:94.0px">23 kB</div>
<div class="c r" style="left:962px;width:108.0px">162</div>
<div class="c r" style="left:1073px;width:95.0px">14 kB</div>
<div class="c" style="left:1171px;width:78px;text-align:center">223.205255</div>
<div class="c" style="left:1250px;width:80px;text-align:center">81.0552</div>
<div class="c r" style="left:1331px;width:93px">2,287 bits/s</div>
</div>
<div class="row" style="top:455px;background:#f7f7f7;color:#000">
<div class="bar" style="left:1171.0px;width:108.3px;background:#d8d8d8"></div>
<div class="c" style="left:3px;width:87px;letter-spacing:-0.28px">127.0.0.1</div>
<div class="c r" style="left:88px;width:62.0px">43688</div>
<div class="c" style="left:156px;width:85px;letter-spacing:-0.28px">127.0.0.1</div>
<div class="c r" style="left:239px;width:61.0px">10502</div>
<div class="c r" style="left:303px;width:71.0px">1,227</div>
<div class="c r" style="left:377px;width:58.0px">93 kB</div>
<div class="c r" style="left:438px;width:84.0px">0</div>
<div class="c r" style="left:525px;width:104.0px">1,227</div>
<div class="c r" style="left:632px;width:120.0px">100.00%</div>
<div class="c r" style="left:755px;width:107.0px">802</div>
<div class="c r" style="left:865px;width:94.0px">58 kB</div>
<div class="c r" style="left:962px;width:108.0px">425</div>
<div class="c r" style="left:1073px;width:95.0px">35 kB</div>
<div class="c" style="left:1171px;width:78px;text-align:center">0.000000</div>
<div class="c" style="left:1250px;width:80px;text-align:center">207.2713</div>
<div class="c r" style="left:1331px;width:93px">2,228 bits/s</div>
</div>
</div>
<div style="left:232px;top:552px;width:1416px;height:14px;background:#e5e5e5;border-top:1px solid #c2c2c2;"></div>
<div style="left:232px;top:553px;width:14px;height:13px;background:#f8f8f8;border-right:1px solid #c2c2c2"><svg style="left:3px;top:1.5px" width="6" height="9"><path d="M4.6 0.6l-4 3.9l4 3.9z" fill="#4a4a4a"/></svg></div>
<div style="left:246px;top:553px;width:1288px;height:13px;background:linear-gradient(#fdfdfd,#f0f0f0);border-right:1px solid #c2c2c2"></div>
<div style="left:1634px;top:553px;width:14px;height:13px;background:#f8f8f8;border-left:1px solid #c2c2c2"><svg style="left:3px;top:1.5px" width="6" height="9"><path d="M0.8 0.6l4 3.9l-4 3.9z" fill="#4a4a4a"/></svg></div>
<div class="btn" style="left:1571px;top:575px;width:80px;height:25px;border-color:#3079ad;background:linear-gradient(#fdfdfe,#eef1f4 50%,#dde5eb);"></div>
<svg style="left:1587px;top:581px" width="12" height="12" viewBox="0 0 12 12"><path d="M2 2l8 8M10 2l-8 8" stroke="#767676" stroke-width="2.8" stroke-linecap="round" fill="none"/><path d="M2 2l8 8M10 2l-8 8" stroke="#c2c2c2" stroke-width="1.1" stroke-linecap="round" fill="none"/></svg>
<div class="t" style="left:1602.5px;top:580px;transform-origin:0 0;transform:scaleX(0.9751);font-size:12.4px;"><u style="text-underline-offset:2px">C</u>lose</div>
</div></body></html>
